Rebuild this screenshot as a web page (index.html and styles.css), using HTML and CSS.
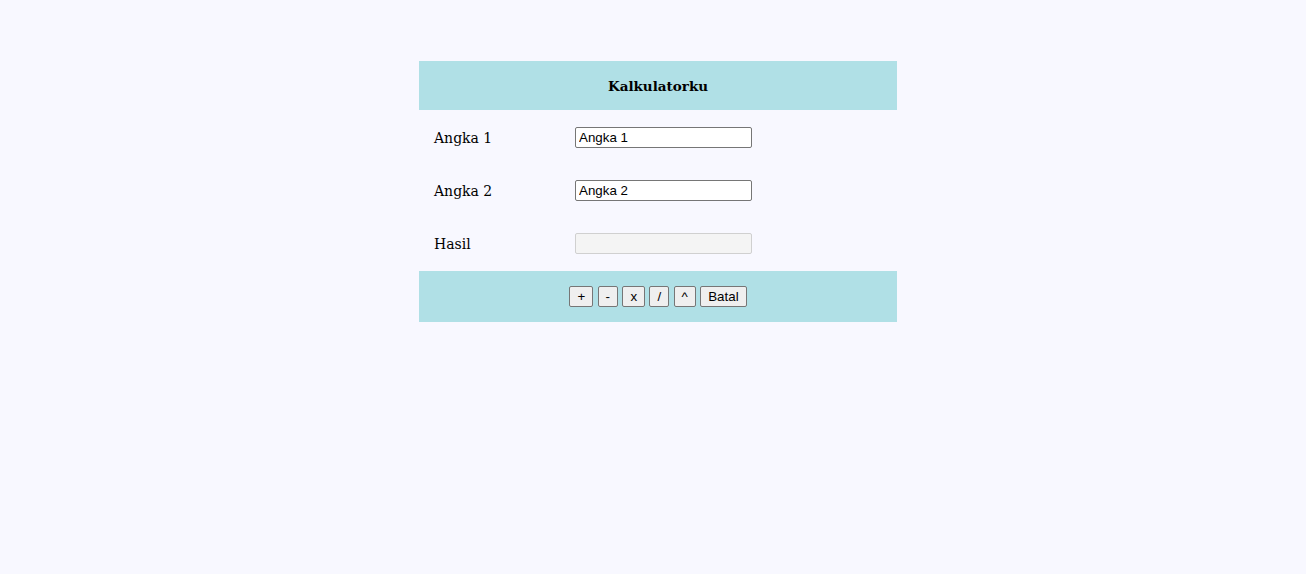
FILE: index.html
```html
<!DOCTYPE html>
<html>
<head>
<meta charset="utf-8">
<title>Kalkulatorku</title>
<link rel="stylesheet" href="styles.css">
</head>
<body>
<table class="calc">
  <tr>
    <th colspan="2" class="head">Kalkulatorku</th>
  </tr>
  <tr>
    <td class="label">Angka 1</td>
    <td class="field"><input type="text" class="inp" value="Angka 1"></td>
  </tr>
  <tr>
    <td class="label">Angka 2</td>
    <td class="field"><input type="text" class="inp" value="Angka 2"></td>
  </tr>
  <tr class="last">
    <td class="label">Hasil</td>
    <td class="field"><input type="text" class="inp" disabled></td>
  </tr>
  <tr>
    <td colspan="2" class="foot">
      <div class="btns">
        <button class="btn">+</button>
        <button class="btn">-</button>
        <button class="btn">x</button>
        <button class="btn">/</button>
        <button class="btn">^</button>
        <button class="btn">Batal</button>
      </div>
    </td>
  </tr>
</table>
</body>
</html>
```
FILE: styles.css
```css
html, body {
  margin: 0;
  background: #f8f8ff;
}
body {
  padding-top: 61px;
  padding-left: 10px;
  font-family: "DejaVu Serif", "Liberation Serif", serif;
  color: #000;
}
.calc {
  width: 478px;
  margin: 0 auto;
  border-collapse: separate;
  border-spacing: 0;
  font-size: 14px;
}
.calc th, .calc td {
  padding: 15px;
}
.calc .head {
  background: #b0e0e6;
  font-size: 13.5px;
  font-weight: bold;
  line-height: 19px;
  height: 19px;
  text-align: center;
  vertical-align: middle;
  padding-top: 16px;
  padding-bottom: 14px;
}
.calc .label {
  width: 111px;
  height: 23px;
  line-height: 23px;
  text-align: left;
  padding-top: 17px;
  padding-bottom: 13px;
}
.calc .field {
  text-align: left;
  padding-top: 16px;
  padding-bottom: 14px;
}
.calc .last .label {
  padding-bottom: 15px;
}
.calc .last .field {
  padding-bottom: 16px;
}
.inp {
  font-family: "Liberation Sans", Arial, sans-serif;
  font-size: 13.333px;
  width: 177px;
  height: 21px;
  box-sizing: border-box;
  padding: 1px 3px;
  border: 1px solid #767676;
  border-radius: 2px;
  background: #fff;
  color: #000;
  margin: 0;
  vertical-align: middle;
}
.inp:disabled {
  background: #f4f4f4;
  border-color: #d0d0d0;
}
.calc .foot {
  background: #b0e0e6;
  height: 21px;
  padding: 15px;
}
.btns {
  display: flex;
  justify-content: center;
  gap: 4.4px;
}
.btn {
  font-family: "Liberation Sans", Arial, sans-serif;
  font-size: 13.333px;
  height: 21px;
  padding: 1px 7px;
  margin: 0;
  border: 1px solid #767676;
  border-radius: 2px;
  background: #efefef;
  color: #000;
}
```
